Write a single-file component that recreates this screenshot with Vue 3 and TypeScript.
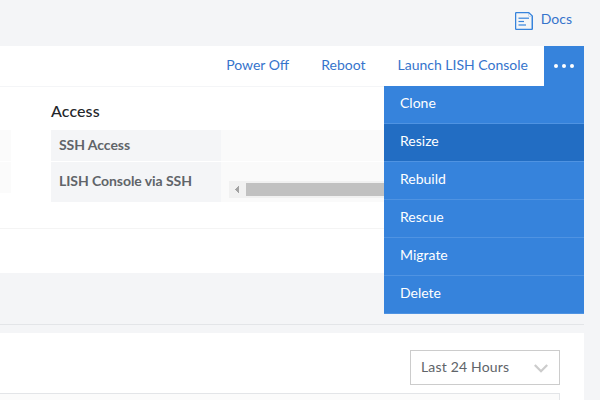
<script setup lang="ts">
import { ref } from 'vue'

const actions: string[] = ['Power Off', 'Reboot', 'Launch LISH Console']
const menu: string[] = ['Clone', 'Resize', 'Rebuild', 'Rescue', 'Migrate', 'Delete']
const active = ref<string>('Resize')
</script>

<template>
  <div class="page">
    <header class="top">
      <a class="docs">
        <svg class="doc-icon" width="18" height="18" viewBox="0 0 18 18" fill="none" stroke="#3683dc" stroke-width="1">
          <path d="M1.6 .6H13.7L17.4 4V16.4Q17.4 17.4 16.4 17.4H1.6Q.6 17.4 .6 16.4V1.6Q.6 .6 1.6 .6Z" stroke-width="1.3" />
          <path d="M13.5 1V3.5Q13.5 4.5 14.5 4.5H17" stroke-opacity=".25" />
          <path d="M16.5 5V17" stroke-opacity=".3" />
          <path d="M3.5 6.3H14M3.5 13H11" stroke-width="1.6" stroke-opacity=".8" />
          <path d="M3.5 9.5H9" stroke-width="1.2" />
        </svg>
        <span>Docs</span>
      </a>
    </header>

    <main class="content">
      <section class="panel">
        <nav class="toolbar">
          <a v-for="a in actions" :key="a" class="action">{{ a }}</a>
          <button class="more" aria-label="More actions">
            <svg width="20" height="4" viewBox="0 0 20 4" fill="#fff">
              <circle cx="2" cy="2" r="2" /><circle cx="10" cy="2" r="2" /><circle cx="18" cy="2" r="2" />
            </svg>
          </button>
          <ul class="menu">
            <li v-for="m in menu" :key="m" :class="{ active: m === active }" @mouseenter="active = m"><span>{{ m }}</span></li>
          </ul>
        </nav>

        <div class="details">
          <div class="previous">
            <div class="stub"></div>
            <div class="stub"></div>
          </div>
          <div class="access">
            <h2>Access</h2>
            <div class="row ssh">
              <div class="label"><span>SSH Access</span></div>
              <div class="value"></div>
            </div>
            <div class="row lish">
              <div class="label"><span>LISH Console via SSH</span></div>
              <div class="value">
                <div class="scrollbar">
                  <svg width="17" height="17" viewBox="0 0 17 17" fill="#a3a3a3" shape-rendering="crispEdges">
                    <path d="M10 5V12H9V11H8V10H7V9H6V8H7V7H8V6H9V5Z" />
                  </svg>
                  <div class="thumb"></div>
                </div>
              </div>
            </div>
          </div>
        </div>
      </section>

      <div class="divider"></div>

      <section class="stats">
        <div class="select">
          <span>Last 24 Hours</span>
          <svg width="14" height="9" viewBox="0 0 14 9" fill="none" stroke="#ccc" stroke-width="2.3">
            <path d="M.8 1L7 7.2L13.2 1" />
          </svg>
        </div>
        <div class="chart"></div>
      </section>
    </main>
  </div>
</template>

<style>
body {
  background: #f4f5f7;
}
</style>

<style scoped>
.page {
  box-sizing: border-box;
  width: 600px;
  height: 400px;
  overflow: hidden;
  background: #f4f5f7;
  font: 14px/20px Lato, sans-serif;
  color: #606469;
}
.top {
  box-sizing: border-box;
  display: flex;
  justify-content: flex-end;
  height: 46px;
  padding: 9px 28px 0 0;
}
.docs {
  display: flex;
  gap: 8px;
  height: 20px;
  color: #3674cc;
}
.doc-icon {
  margin-top: 3px;
}
.content {
  width: 584px;
}
.panel {
  height: 227px;
  background: #fff;
}
.toolbar {
  position: relative;
  display: flex;
  justify-content: flex-end;
  height: 40px;
  border-bottom: 1px solid #f4f5f7;
}
.action {
  padding: 9px 16px 0;
  color: #3674cc;
}
.more {
  display: flex;
  align-items: center;
  justify-content: center;
  width: 40px;
  height: 40px;
  padding: 0;
  border: 0;
  background: #3683dc;
}
.menu {
  position: absolute;
  z-index: 2;
  top: 40px;
  right: 0;
  width: 200px;
  margin: 0;
  padding: 0;
  list-style: none;
  background: #3683dc;
  color: #fff;
}
.menu li {
  box-sizing: border-box;
  height: 38px;
  padding: 7px 16px 0;
  border-bottom: 1px solid #4f93e2;
}
.menu li.active {
  background: #226dc3;
}
.details {
  display: flex;
  gap: 40px;
  height: 141px;
  border-bottom: 1px solid #f4f4f4;
}
.previous {
  display: flex;
  flex-direction: column;
  gap: 1px;
  width: 11px;
  padding-top: 43px;
}
.stub {
  height: 31px;
  background: #fbfbfb;
}
.access {
  flex: 1;
}
h2 {
  height: 20px;
  margin: 0;
  padding: 14px 0 9px;
  font-size: 16px;
  font-weight: 500;
  line-height: 20px;
  letter-spacing: 0.1px;
  color: #23262a;
}
.row {
  display: flex;
}
.ssh {
  height: 31px;
  margin-bottom: 1px;
}
.lish {
  height: 40px;
}
.label {
  box-sizing: border-box;
  display: flex;
  align-items: center;
  width: 170px;
  padding: 0 0 2px 8px;
  background: #f4f5f7;
  font-weight: 700;
  letter-spacing: -0.06px;
}
.value {
  flex: 1;
  background: #fafafa;
}
.scrollbar {
  display: flex;
  align-items: center;
  height: 17px;
  margin: 19px 0 0 8px;
  background: #f1f1f1;
}
.thumb {
  flex: 1;
  height: 13px;
  background: #c1c1c1;
}
.divider {
  height: 51px;
  margin-bottom: 8px;
  border-bottom: 1px solid #e3e5e8;
}
.stats {
  display: flex;
  flex-direction: column;
  align-items: flex-end;
  gap: 8px;
  box-sizing: border-box;
  height: 80px;
  padding: 17px 24px 0 0;
  background: #fff;
}
.select {
  box-sizing: border-box;
  display: flex;
  flex-shrink: 0;
  align-items: center;
  justify-content: space-between;
  width: 150px;
  height: 35px;
  padding: 0 11px 0 10px;
  border: 1px solid #ccc;
  letter-spacing: 0.18px;
}
.select span {
  padding-bottom: 2px;
}
.select svg {
  margin-top: 2px;
}
.chart {
  box-sizing: border-box;
  flex-shrink: 0;
  width: 560px;
  height: 40px;
  border: solid #e3e5e8;
  border-width: 1px 1px 0 0;
  background: #fbfbfb;
}
</style>
